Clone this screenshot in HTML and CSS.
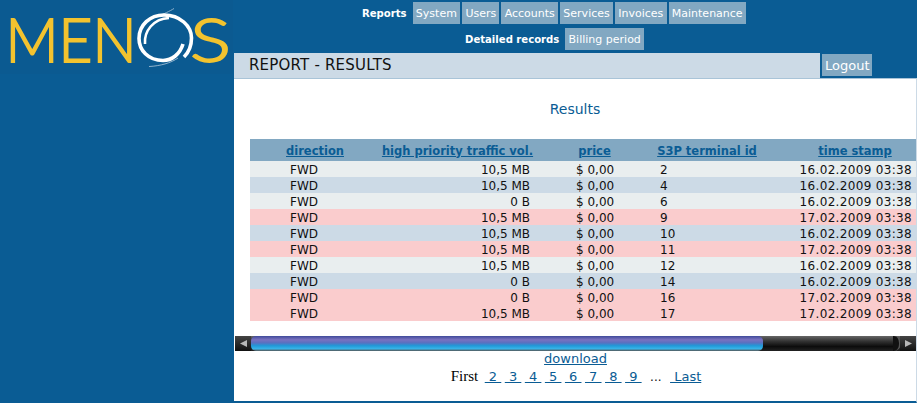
FILE: index.html
```html
<!DOCTYPE html>
<html lang="en">
<head>
<meta charset="utf-8">
<title>Report - Results</title>
<link rel="stylesheet" href="styles.css">
</head>
<body>
<div class="page">
  <aside class="side">
    <svg class="logo" viewBox="0 0 233 74" width="233" height="74">
      <rect width="233" height="74" fill="#0b5a91"/>
      <text class="logo-text" x="5.500" y="62" textLength="131" lengthAdjust="spacingAndGlyphs">MEN</text>
      <text class="logo-text" x="190" y="62" textLength="41" lengthAdjust="spacingAndGlyphs">S</text>
      <path d="M156 17C164 14 170 11 174 8.500" fill="none" stroke="#8fb2cc" stroke-width="1"/>
      <path d="M149 66.500C160 66 171 63 178 58" fill="none" stroke="#8fb2cc" stroke-width="1"/>
      <path d="M183 44C180 54 172 60.500 163 60.500C148 60.500 139 50 139 38.500C139 25 150 15 164 15C180 15 191.500 26 191.500 38C191.500 46 189 52 184 57" fill="none" stroke="#fff" stroke-width="3.600"/>
      <path d="M145 44C144 31 153 19 169 18" fill="none" stroke="#fff" stroke-width="2.600"/>
    </svg>
  </aside>
  <main class="main">
    <header class="head">
      <nav class="nav nav-top">
        <span class="nav-on">Reports</span>
        <a class="nav-btn">System</a><a class="nav-btn">Users</a><a class="nav-btn">Accounts</a><a class="nav-btn">Services</a><a class="nav-btn">Invoices</a><a class="nav-btn">Maintenance</a>
      </nav>
      <nav class="nav nav-sub">
        <span class="nav-on">Detailed records</span>
        <a class="nav-btn">Billing period</a>
      </nav>
      <div class="title-row">
        <div class="title">REPORT - RESULTS</div>
        <a class="nav-btn logout">Logout</a>
      </div>
    </header>
    <section class="content">
      <h1 class="heading">Results</h1>
      <div class="table-clip">
        <table class="report">
          <colgroup><col class="c1"><col class="c2"><col class="c3"><col class="c4"><col class="c5"></colgroup>
          <thead>
            <tr><th><a>direction</a></th><th><a>high priority traffic vol.</a></th><th><a>price</a></th><th><a>S3P terminal id</a></th><th><a>time stamp</a></th></tr>
          </thead>
          <tbody>
            <tr class="grey"><td class="dir">FWD</td><td class="num">10,5 MB</td><td class="price">$ 0,00</td><td class="id">2</td><td class="time">16.02.2009 03:38</td></tr>
            <tr class="blue"><td class="dir">FWD</td><td class="num">10,5 MB</td><td class="price">$ 0,00</td><td class="id">4</td><td class="time">16.02.2009 03:38</td></tr>
            <tr class="grey"><td class="dir">FWD</td><td class="num">0 B</td><td class="price">$ 0,00</td><td class="id">6</td><td class="time">16.02.2009 03:38</td></tr>
            <tr class="red"><td class="dir">FWD</td><td class="num">10,5 MB</td><td class="price">$ 0,00</td><td class="id">9</td><td class="time">17.02.2009 03:38</td></tr>
            <tr class="blue"><td class="dir">FWD</td><td class="num">10,5 MB</td><td class="price">$ 0,00</td><td class="id">10</td><td class="time">16.02.2009 03:38</td></tr>
            <tr class="red"><td class="dir">FWD</td><td class="num">10,5 MB</td><td class="price">$ 0,00</td><td class="id">11</td><td class="time">17.02.2009 03:38</td></tr>
            <tr class="grey"><td class="dir">FWD</td><td class="num">10,5 MB</td><td class="price">$ 0,00</td><td class="id">12</td><td class="time">16.02.2009 03:38</td></tr>
            <tr class="blue"><td class="dir">FWD</td><td class="num">0 B</td><td class="price">$ 0,00</td><td class="id">14</td><td class="time">16.02.2009 03:38</td></tr>
            <tr class="red"><td class="dir">FWD</td><td class="num">0 B</td><td class="price">$ 0,00</td><td class="id">16</td><td class="time">17.02.2009 03:38</td></tr>
            <tr class="red"><td class="dir">FWD</td><td class="num">10,5 MB</td><td class="price">$ 0,00</td><td class="id">17</td><td class="time">17.02.2009 03:38</td></tr>
          </tbody>
        </table>
      </div>
      <div class="scrollbar">
        <div class="arrow"><svg width="12" height="15" viewBox="0 0 12 15"><path d="M3 7.500L10 4V11Z" fill="#b8b8b8"/></svg></div>
        <div class="track"><div class="thumb"></div><div class="track-end"></div><div class="track-cap"></div></div>
        <div class="arrow"><svg width="12" height="15" viewBox="0 0 12 15"><path d="M10 7.500L3 4V11Z" fill="#b8b8b8"/></svg></div>
      </div>
      <div class="download"><a>download</a></div>
      <div class="pager">
        <span class="first">First</span>
        <a>&nbsp;2&nbsp;</a><a>&nbsp;3&nbsp;</a><a>&nbsp;4&nbsp;</a><a>&nbsp;5&nbsp;</a><a>&nbsp;6&nbsp;</a><a>&nbsp;7&nbsp;</a><a>&nbsp;8&nbsp;</a><a>&nbsp;9&nbsp;</a>
        <span class="dots">...</span>
        <a>&nbsp;Last</a>
      </div>
    </section>
  </main>
</div>
</body>
</html>
```
FILE: styles.css
```css
* { box-sizing: border-box; }
html, body { margin: 0; height: 100%; }
body {
  background: #0a5c94;
  font-family: "DejaVu Sans", Verdana, sans-serif;
  font-size: 12px;
  overflow: hidden;
}
.page { display: flex; width: 917px; height: 403px; }
.side { width: 234px; flex: none; }
.logo { display: block; }
.logo-text { font-family: "Lato", "Open Sans", sans-serif; font-weight: 300; font-size: 62px; fill: #f3c32f; stroke: #f3c32f; stroke-width: 1.8px; }
.main { flex: 1; display: flex; flex-direction: column; min-width: 0; }
.head { height: 78px; flex: none; display: flex; flex-direction: column; }
.nav { display: flex; align-items: center; gap: 2px; height: 22px; }
.nav-top { margin-top: 2px; padding-left: 128px; }
.nav-sub { margin-top: 4px; padding-left: 231px; }
.nav-on { color: #fff; font-weight: bold; font-size: 10.1px; margin-right: 4px; white-space: nowrap; line-height: 24px; padding-top: 1px; }
.nav-btn {
  background: #82a8c2;
  color: #fff;
  height: 22px;
  line-height: 24px;
  padding: 0 3.25px;
  font-size: 11px;
  white-space: nowrap;
}
.title-row { display: flex; align-items: flex-start; margin-top: 3px; height: 25px; }
.title {
  width: 586px;
  height: 25px;
  line-height: 25px;
  padding-left: 15px;
  background: #ccdae6;
  font-size: 15px;
  letter-spacing: .2px;
  color: #111;
}
.logout { margin: 1px 0 0 2px; width: 50px; padding: 0 3px; font-size: 13px; }
.content {
  flex: 1;
  background: #fff;
  border-top: 1px solid #a9c4d8;
  border-right: 1px solid #ccdae6;
  border-bottom: 2px solid #0a5c94;
  min-height: 0;
}
.heading {
  margin: 0;
  padding-top: 22px;
  height: 60px;
  text-align: center;
  font-size: 14px;
  font-weight: normal;
  line-height: 17px;
  color: #0a5c94;
}
.table-clip { margin-left: 16px; overflow: hidden; height: 197px; }
.report { border-collapse: collapse; table-layout: fixed; width: 700px; }
.c1 { width: 130px; }
.c2 { width: 155px; }
.c3 { width: 119px; }
.c4 { width: 106px; }
.c5 { width: 190px; }
.report th {
  background: #82a8c2;
  height: 22px;
  padding: 1px 0 0;
  text-align: center;
  font-size: 11.5px;
  white-space: nowrap;
}
.report th a { color: #0a5c94; text-decoration: underline; }
.report td { height: 16px; padding: 2px 0 0; line-height: 14px; color: #111; white-space: nowrap; }
.grey td { background: #e9eeef; }
.blue td { background: #ccdae6; }
.red td { background: #facccd; }
.report .dir { padding-left: 40px; }
.report .num { text-align: right; padding-right: 5px; }
.report .price { padding-left: 41px; }
.report .id { padding-left: 6px; }
.report .time { text-align: right; padding-right: 38px; letter-spacing: .33px; }
.scrollbar { display: flex; height: 15px; margin: 0 0 0 1px; background: #111; }
.arrow { width: 16px; flex: none; display: flex; justify-content: center; background: linear-gradient(#444, #111); }
.track { flex: 1; display: flex; background: linear-gradient(#666 0%, #333 35%, #0c0c0c 70%, #222 100%); }
.thumb {
  width: 512px;
  border-radius: 5px;
  background: linear-gradient(#3f4a9a 0%, #7a72c0 25%, #5a70c0 45%, #1f9ad8 65%, #38b4e8 85%, #555 100%);
}
.track-end { flex: 1; }
.track-cap { width: 8px; margin-right: -1px; border-radius: 0 7px 7px 0; border-right: 2px solid #555; background: #111; }
.download { text-align: center; height: 16px; line-height: 16px; font-size: 13px; padding-left: 1px; }
.download a, .pager a { color: #0a5c94; text-decoration: underline; }
.pager {
  display: flex;
  justify-content: center;
  align-items: baseline;
  gap: 3.5px;
  height: 18px;
  font-size: 13px;
  line-height: 18px;
  padding-left: 2px;
}
.first { font-family: "Liberation Serif", serif; font-size: 15px; color: #000; margin-right: 3px; }
.dots { margin: 0 5px; color: #111; font-size: 12px; }
```
